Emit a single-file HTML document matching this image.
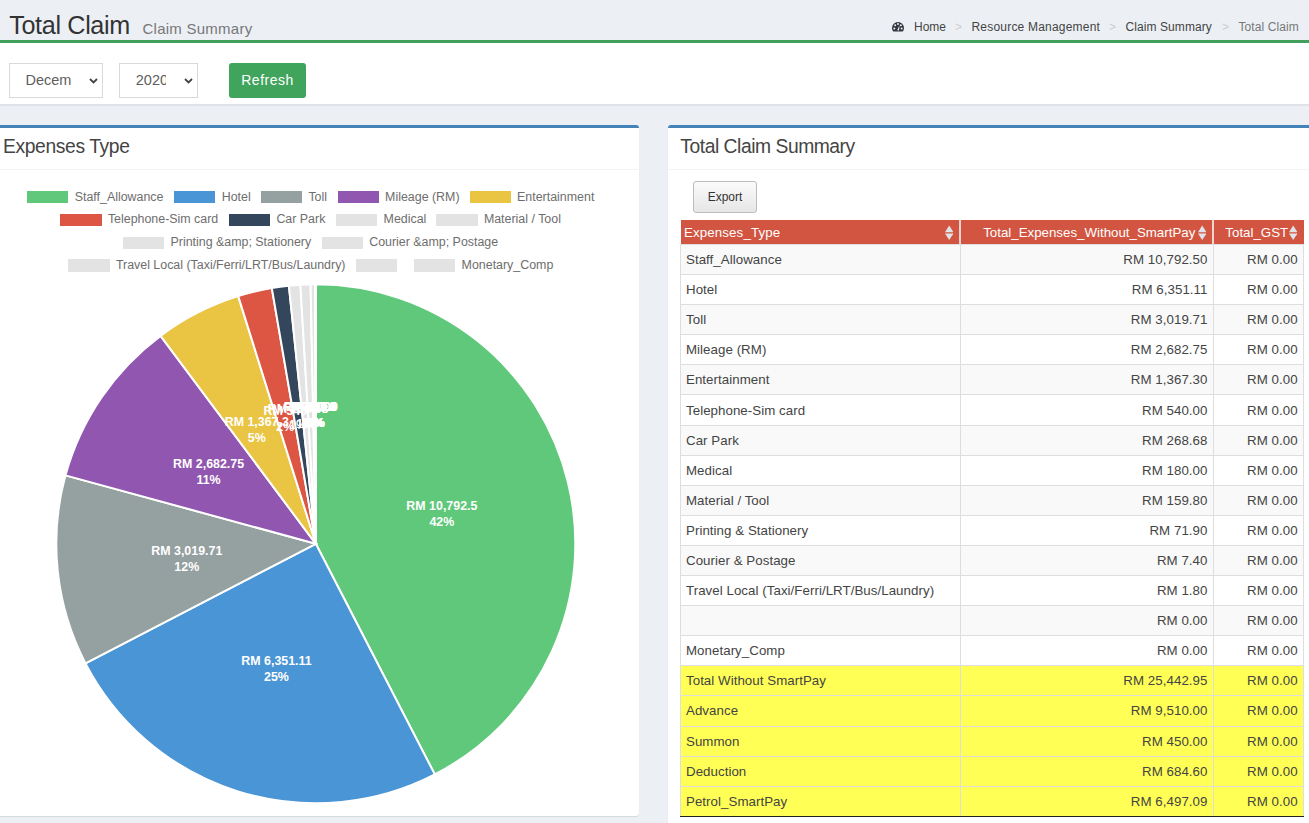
<!DOCTYPE html>
<html><head><meta charset="utf-8">
<style>
*{box-sizing:border-box;}
html,body{margin:0;padding:0;}
body{width:1309px;height:823px;overflow:hidden;position:relative;background:#ecf0f5;font-family:"Liberation Sans",sans-serif;color:#333;}
.abs{position:absolute;}
.h1{position:absolute;left:9.2px;top:10.3px;font-size:25.2px;line-height:30px;color:#333;white-space:nowrap;letter-spacing:-0.35px;}
.small{position:absolute;left:142.5px;top:18.7px;font-size:15px;line-height:20px;color:#777;white-space:nowrap;letter-spacing:0.25px;}
.bc{position:absolute;top:18.8px;font-size:12px;line-height:16px;color:#444;white-space:nowrap;}
.sep{color:#ccc;}
.greenline{position:absolute;left:0;top:40px;width:1309px;height:3px;background:#42a05d;}
.band{position:absolute;left:0;top:43px;width:1309px;height:61px;background:#fff;}
.bandline{position:absolute;left:0;top:104px;width:1309px;height:2px;background:#dfe2e8;}
.sel{position:absolute;top:63px;height:35px;border:1px solid #d9d9d9;background:#fff;overflow:hidden;}
.sel .t{position:absolute;top:8.2px;font-size:14.5px;line-height:16px;color:#5e5e5e;white-space:nowrap;overflow:hidden;}
.sel svg{position:absolute;}
.btn{position:absolute;left:229px;top:63px;width:77px;height:35px;background:#40a45c;border-radius:3px;color:#fff;font-size:14px;line-height:35px;text-align:center;letter-spacing:0.5px;}
.box{position:absolute;background:#fff;border-top:3px solid #4383b8;border-radius:3px;box-shadow:0 1px 1px rgba(0,0,0,0.1);}
.boxtitle{position:absolute;font-size:19.3px;line-height:22px;color:#444;white-space:nowrap;}
.hline{position:absolute;height:1px;background:#f4f4f4;}
.lb{position:absolute;width:41.4px;height:12.4px;}
.lt{position:absolute;font-size:12.42px;line-height:16px;color:#6e6e6e;white-space:nowrap;}
.pielabels text{font-family:"Liberation Sans",sans-serif;font-weight:bold;font-size:12.42px;fill:#fff;text-anchor:middle;}
.export{position:absolute;left:693px;top:181px;width:64px;height:32px;border:1px solid #bdbdbd;border-radius:3px;background:linear-gradient(#fbfbfb,#e6e6e6);font-size:12px;line-height:30px;text-align:center;color:#333;}
table.dt{position:absolute;left:680.4px;top:220px;width:622.8px;border-collapse:collapse;table-layout:fixed;font-size:13.3px;}
table.dt th{background:#d25541;color:#fff;font-weight:normal;height:24.5px;padding:0 5px;text-align:left;white-space:nowrap;position:relative;border-left:2px solid #f3d5cf;}
table.dt th:first-child{border-left:none;}
table.dt td{height:30.1px;padding:0 5.5px 0 4.6px;border:1px solid #dedede;white-space:nowrap;color:#444;letter-spacing:0.05px;}
table.dt td.r{text-align:right;}
tr.odd td{background:#f9f9f9;}
tr.even td{background:#fff;}
tr.yel td{background:#ffff55;}
tr:last-child td{border-bottom:1px solid #222;height:30.6px;}
.si{position:absolute;top:4.6px;right:6.3px;}
</style></head>
<body>
<div class="h1">Total Claim</div><div class="small">Claim Summary</div>

<svg class="abs" style="left:892.4px;top:22.4px" width="12" height="9.6" viewBox="0 0 12 9.6">
<path d="M1.3,9.6 C0.5,8.6 0,7.4 0,6 A6,6 0 0 1 12,6 C12,7.4 11.5,8.6 10.7,9.6 Z" fill="#33363f"/>
<circle cx="2.3" cy="6.6" r="1" fill="#ecf0f5"/><circle cx="3.2" cy="3.3" r="1" fill="#ecf0f5"/><circle cx="6" cy="2" r="1" fill="#ecf0f5"/><circle cx="8.8" cy="3.3" r="1" fill="#ecf0f5"/><circle cx="9.7" cy="6.6" r="1" fill="#ecf0f5"/>
<path d="M5.2,8.2 L7.6,3.2 L7,8.4 Z" fill="#ecf0f5"/>
</svg>
<div class="bc" style="left:914px">Home</div>
<div class="bc sep" style="left:955px">&gt;</div>
<div class="bc" style="left:971.5px;letter-spacing:0.2px">Resource Management</div>
<div class="bc sep" style="left:1109px">&gt;</div>
<div class="bc" style="left:1125.5px;letter-spacing:0.08px">Claim Summary</div>
<div class="bc sep" style="left:1222px">&gt;</div>
<div class="bc" style="left:1238.5px;color:#777;letter-spacing:0.1px">Total Claim</div>

<div class="greenline"></div>
<div class="band"></div>
<div class="bandline"></div>

<div class="sel" style="left:9px;width:94px;"><div class="t" style="left:15.5px;width:46.5px;">December</div>
<svg style="left:78.6px;top:13.6px" width="9" height="6" viewBox="0 0 9 6"><path d="M1,1 L4.5,4.5 L8,1" fill="none" stroke="#444" stroke-width="1.8"/></svg></div>
<div class="sel" style="left:119px;width:79px;"><div class="t" style="left:15.8px;width:30.7px;">2020</div>
<svg style="left:63.8px;top:13.6px" width="9" height="6" viewBox="0 0 9 6"><path d="M1,1 L4.5,4.5 L8,1" fill="none" stroke="#444" stroke-width="1.8"/></svg></div>
<div class="btn">Refresh</div>

<!-- left box -->
<div class="box" style="left:-7px;top:125px;width:645.7px;height:690.8px;"></div>
<div class="boxtitle" style="left:3px;top:136px;letter-spacing:-0.38px">Expenses Type</div>
<div class="hline" style="left:0;top:169px;width:638px;"></div>
<div class="lb" style="left:27.1px;top:191px;background:#5fc87b"></div><div class="lt" style="left:74.7px;top:188.5px">Staff_Allowance</div>
<div class="lb" style="left:174.1px;top:191px;background:#4a95d5"></div><div class="lt" style="left:221.7px;top:188.5px">Hotel</div>
<div class="lb" style="left:260.8px;top:191px;background:#95a0a1"></div><div class="lt" style="left:308.4px;top:188.5px">Toll</div>
<div class="lb" style="left:337.5px;top:191px;background:#9157b0"></div><div class="lt" style="left:385.1px;top:188.5px">Mileage (RM)</div>
<div class="lb" style="left:469.5px;top:191px;background:#eac443"></div><div class="lt" style="left:517.1px;top:188.5px">Entertainment</div>
<div class="lb" style="left:60.3px;top:213.6px;background:#dc5643"></div><div class="lt" style="left:107.9px;top:211.1px">Telephone-Sim card</div>
<div class="lb" style="left:228.8px;top:213.6px;background:#34465c"></div><div class="lt" style="left:276.4px;top:211.1px">Car Park</div>
<div class="lb" style="left:336px;top:213.6px;background:#e3e3e3"></div><div class="lt" style="left:383.6px;top:211.1px">Medical</div>
<div class="lb" style="left:436.3px;top:213.6px;background:#e3e3e3"></div><div class="lt" style="left:483.9px;top:211.1px">Material / Tool</div>
<div class="lb" style="left:122.9px;top:236.9px;background:#e3e3e3"></div><div class="lt" style="left:170.5px;top:234.4px">Printing &amp;amp; Stationery</div>
<div class="lb" style="left:321.6px;top:236.9px;background:#e3e3e3"></div><div class="lt" style="left:369.2px;top:234.4px">Courier &amp;amp; Postage</div>
<div class="lb" style="left:68.3px;top:259.3px;background:#e3e3e3"></div><div class="lt" style="left:115.9px;top:256.8px">Travel Local (Taxi/Ferri/LRT/Bus/Laundry)</div>
<div class="lb" style="left:356.1px;top:259.3px;background:#e3e3e3"></div><div class="lt" style="left:403.7px;top:256.8px"></div>
<div class="lb" style="left:414px;top:259.3px;background:#e3e3e3"></div><div class="lt" style="left:461.6px;top:256.8px">Monetary_Comp</div>
<svg class="abs" style="left:0;top:0" width="660" height="823">
<path d="M315.80,543.80 L315.80,284.30 A259.5,259.5 0 0 1 434.79,774.41 Z" fill="#5fc87b" stroke="#fff" stroke-width="2" stroke-linejoin="miter"/>
<path d="M315.80,543.80 L434.79,774.41 A259.5,259.5 0 0 1 85.47,663.34 Z" fill="#4a95d5" stroke="#fff" stroke-width="2" stroke-linejoin="miter"/>
<path d="M315.80,543.80 L85.47,663.34 A259.5,259.5 0 0 1 65.49,475.34 Z" fill="#95a0a1" stroke="#fff" stroke-width="2" stroke-linejoin="miter"/>
<path d="M315.80,543.80 L65.49,475.34 A259.5,259.5 0 0 1 160.56,335.86 Z" fill="#9157b0" stroke="#fff" stroke-width="2" stroke-linejoin="miter"/>
<path d="M315.80,543.80 L160.56,335.86 A259.5,259.5 0 0 1 238.21,296.17 Z" fill="#eac443" stroke="#fff" stroke-width="2" stroke-linejoin="miter"/>
<path d="M315.80,543.80 L238.21,296.17 A259.5,259.5 0 0 1 271.82,288.05 Z" fill="#dc5643" stroke="#fff" stroke-width="2" stroke-linejoin="miter"/>
<path d="M315.80,543.80 L271.82,288.05 A259.5,259.5 0 0 1 288.88,285.70 Z" fill="#34465c" stroke="#fff" stroke-width="2" stroke-linejoin="miter"/>
<path d="M315.80,543.80 L288.88,285.70 A259.5,259.5 0 0 1 300.37,284.76 Z" fill="#e3e3e3" stroke="#fff" stroke-width="2" stroke-linejoin="miter"/>
<path d="M315.80,543.80 L300.37,284.76 A259.5,259.5 0 0 1 310.60,284.35 Z" fill="#e3e3e3" stroke="#fff" stroke-width="2" stroke-linejoin="miter"/>
<path d="M315.80,543.80 L310.60,284.35 A259.5,259.5 0 0 1 315.21,284.30 Z" fill="#e3e3e3" stroke="#fff" stroke-width="2" stroke-linejoin="miter"/>
<path d="M315.80,543.80 L315.21,284.30 A259.5,259.5 0 0 1 315.68,284.30 Z" fill="#e3e3e3" stroke="#fff" stroke-width="2" stroke-linejoin="miter"/>
<path d="M315.80,543.80 L315.68,284.30 A259.5,259.5 0 0 1 315.80,284.30 Z" fill="#e3e3e3" stroke="#fff" stroke-width="2" stroke-linejoin="miter"/>
<g class="pielabels">
<text x="441.89" y="510.44">RM 10,792.5</text><text x="441.89" y="526.44">42%</text>
<text x="276.48" y="664.70">RM 6,351.11</text><text x="276.48" y="680.70">25%</text>
<text x="186.78" y="554.76">RM 3,019.71</text><text x="186.78" y="570.76">12%</text>
<text x="208.58" y="467.98">RM 2,682.75</text><text x="208.58" y="483.98">11%</text>
<text x="256.75" y="425.51">RM 1,367.3</text><text x="256.75" y="441.51">5%</text>
<text x="285.34" y="414.93">RM 540</text><text x="285.34" y="430.93">2%</text>
<text x="298.06" y="412.52">RM 268.68</text><text x="298.06" y="428.52">1%</text>
<text x="305.21" y="411.73">RM 180</text><text x="305.21" y="427.73">1%</text>
<text x="310.64" y="411.40">RM 159.8</text><text x="310.64" y="427.40">1%</text>
<text x="314.35" y="411.31">RM 71.9</text><text x="314.35" y="427.31">0%</text>
<text x="315.62" y="411.30">RM 7.4</text><text x="315.62" y="427.30">0%</text>
<text x="315.77" y="411.30">RM 1.8</text><text x="315.77" y="427.30">0%</text>
<text x="315.80" y="411.30">RM 0</text><text x="315.80" y="427.30">0%</text>
<text x="315.80" y="411.30">RM 0</text><text x="315.80" y="427.30">0%</text>
</g>
</svg>

<!-- right box -->
<div class="box" style="left:668.2px;top:125px;width:660px;height:720px;"></div>
<div class="boxtitle" style="left:680.3px;top:136px;letter-spacing:-0.46px">Total Claim Summary</div>
<div class="hline" style="left:668px;top:169px;width:641px;"></div>
<div class="export">Export</div>
<table class="dt">
<colgroup><col style="width:279.6px"><col style="width:253px"><col style="width:90.2px"></colgroup>
<thead><tr><th style="padding-left:3px;letter-spacing:0.14px">Expenses_Type<svg class="si" width="8.4" height="15" viewBox="0 0 8.4 15"><path d="M4.2 0.4 L8.4 7.2 L0 7.2 Z" fill="#dfe3e8"/><path d="M0 8.6 L8.4 8.6 L4.2 15 Z" fill="#dfe3e8"/></svg></th><th style="text-align:right;padding-right:17.2px;">Total_Expenses_Without_SmartPay<svg class="si" width="8.4" height="15" viewBox="0 0 8.4 15"><path d="M4.2 0.4 L8.4 7.2 L0 7.2 Z" fill="#dfe3e8"/><path d="M0 8.6 L8.4 8.6 L4.2 15 Z" fill="#dfe3e8"/></svg></th><th style="text-align:right;padding-right:15.5px;">Total_GST<svg class="si" width="8.4" height="15" viewBox="0 0 8.4 15"><path d="M4.2 0.4 L8.4 7.2 L0 7.2 Z" fill="#dfe3e8"/><path d="M0 8.6 L8.4 8.6 L4.2 15 Z" fill="#dfe3e8"/></svg></th></tr></thead>
<tbody>
<tr class="odd"><td>Staff_Allowance</td><td class="r">RM 10,792.50</td><td class="r">RM 0.00</td></tr>
<tr class="even"><td>Hotel</td><td class="r">RM 6,351.11</td><td class="r">RM 0.00</td></tr>
<tr class="odd"><td>Toll</td><td class="r">RM 3,019.71</td><td class="r">RM 0.00</td></tr>
<tr class="even"><td>Mileage (RM)</td><td class="r">RM 2,682.75</td><td class="r">RM 0.00</td></tr>
<tr class="odd"><td>Entertainment</td><td class="r">RM 1,367.30</td><td class="r">RM 0.00</td></tr>
<tr class="even"><td>Telephone-Sim card</td><td class="r">RM 540.00</td><td class="r">RM 0.00</td></tr>
<tr class="odd"><td>Car Park</td><td class="r">RM 268.68</td><td class="r">RM 0.00</td></tr>
<tr class="even"><td>Medical</td><td class="r">RM 180.00</td><td class="r">RM 0.00</td></tr>
<tr class="odd"><td>Material / Tool</td><td class="r">RM 159.80</td><td class="r">RM 0.00</td></tr>
<tr class="even"><td>Printing &amp; Stationery</td><td class="r">RM 71.90</td><td class="r">RM 0.00</td></tr>
<tr class="odd"><td>Courier &amp; Postage</td><td class="r">RM 7.40</td><td class="r">RM 0.00</td></tr>
<tr class="even"><td>Travel Local (Taxi/Ferri/LRT/Bus/Laundry)</td><td class="r">RM 1.80</td><td class="r">RM 0.00</td></tr>
<tr class="odd"><td></td><td class="r">RM 0.00</td><td class="r">RM 0.00</td></tr>
<tr class="even"><td>Monetary_Comp</td><td class="r">RM 0.00</td><td class="r">RM 0.00</td></tr>
<tr class="yel"><td>Total Without SmartPay</td><td class="r">RM 25,442.95</td><td class="r">RM 0.00</td></tr>
<tr class="yel"><td>Advance</td><td class="r">RM 9,510.00</td><td class="r">RM 0.00</td></tr>
<tr class="yel"><td>Summon</td><td class="r">RM 450.00</td><td class="r">RM 0.00</td></tr>
<tr class="yel"><td>Deduction</td><td class="r">RM 684.60</td><td class="r">RM 0.00</td></tr>
<tr class="yel"><td>Petrol_SmartPay</td><td class="r">RM 6,497.09</td><td class="r">RM 0.00</td></tr>
</tbody>
</table>
</body></html>
